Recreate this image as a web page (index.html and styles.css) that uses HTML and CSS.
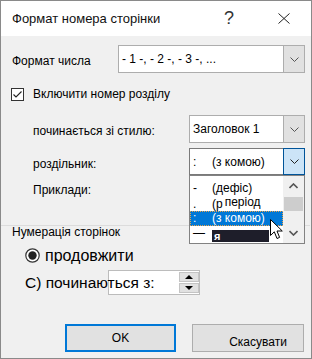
FILE: index.html
```html
<!DOCTYPE html>
<html lang="uk">
<head>
    <meta charset="UTF-8">
    <title>Формат номера сторінки</title>
    <link rel="stylesheet" href="styles.css">
</head>
<body>
    <div class="dialog">
        <!-- Title bar -->
        <div class="titlebar">
            <span class="title">Формат номера сторінки</span>
            <span class="help">?</span>
            <svg class="close" width="12" height="11" viewBox="0 0 12 11">
                <path d="M0.5 0.5 L11.5 10.5 M11.5 0.5 L0.5 10.5" stroke="#222" stroke-width="1" fill="none"/>
            </svg>
        </div>

        <div class="body">
            <!-- Number format -->
            <div class="row row-format">
                <span class="label">Формат числа</span>
                <div class="select select-wide">
                    <span class="value">- 1 -, - 2 -, - 3 -, ...</span>
                    <span class="arrow">
                        <svg width="9" height="5" viewBox="0 0 9 5"><polyline points="0.5,0.5 4.5,4.5 8.5,0.5" fill="none" stroke="#555" stroke-width="1"/></svg>
                    </span>
                </div>
            </div>

            <!-- Include chapter number -->
            <div class="row row-check">
                <svg class="checkbox" width="13" height="13" viewBox="0 0 13 13">
                    <rect x="0.5" y="0.5" width="12" height="12" fill="#fff" stroke="#333"/>
                    <polyline points="2.5,6.5 5,9 10.5,3.5" fill="none" stroke="#222" stroke-width="1.1"/>
                </svg>
                <span class="check-text">Включити номер розділу</span>
            </div>

            <div class="row row-sub row-style">
                <span class="label">починається зі стилю:</span>
                <div class="select">
                    <span class="value">Заголовок 1</span>
                    <span class="arrow">
                        <svg width="9" height="5" viewBox="0 0 9 5"><polyline points="0.5,0.5 4.5,4.5 8.5,0.5" fill="none" stroke="#555" stroke-width="1"/></svg>
                    </span>
                </div>
            </div>

            <div class="row row-sub row-sep">
                <span class="label">роздільник:</span>
                <div class="select-wrap">
                    <div class="select select-active">
                        <span class="value"><span class="sym">:</span>(з комою)</span>
                        <span class="arrow">
                            <svg width="9" height="5" viewBox="0 0 9 5"><polyline points="0.5,0.5 4.5,4.5 8.5,0.5" fill="none" stroke="#222" stroke-width="1"/></svg>
                        </span>
                    </div>

                    <!-- Open dropdown list -->
                    <div class="droplist">
                        <div class="options">
                            <div class="option"><span class="sym">-</span>(дефіс)</div>
                            <div class="option"><span class="sym">.</span>(р<span class="glitch">період</span></div>
                            <div class="option selected"><span class="sym">:</span>(з комою)</div>
                            <div class="option"><span class="sym">—</span><span class="dark">я</span></div>
                        </div>
                        <div class="scrollbar">
                            <span class="scroll-btn">
                                <svg width="9" height="6" viewBox="0 0 9 6"><polyline points="0.5,5 4.5,1 8.5,5" fill="none" stroke="#555" stroke-width="1.6"/></svg>
                            </span>
                            <span class="thumb"></span>
                            <span class="scroll-space"></span>
                            <span class="scroll-btn">
                                <svg width="9" height="6" viewBox="0 0 9 6"><polyline points="0.5,1 4.5,5 8.5,1" fill="none" stroke="#555" stroke-width="1.6"/></svg>
                            </span>
                        </div>
                    </div>

                    <svg class="cursor" width="14" height="21" viewBox="0 0 14 21">
                        <path d="M0.5 0.5 L0.5 16.5 L4.3 12.8 L7 19.5 L9.6 18.4 L7 12 L12.3 12 Z" fill="#fff" stroke="#000" stroke-width="1"/>
                    </svg>
                </div>
            </div>

            <div class="row row-sub row-examples">Приклади:</div>

            <!-- Page numbering -->
            <div class="group">
                <div class="group-title">Нумерація сторінок</div>
                <div class="radio-row">
                    <svg class="radio" width="15" height="15" viewBox="0 0 15 15">
                        <circle cx="7.5" cy="7.5" r="6.7" fill="#fff" stroke="#333" stroke-width="1.2"/>
                        <circle cx="7.5" cy="7.5" r="4.2" fill="#222"/>
                    </svg>
                    <span class="big-text">продовжити</span>
                </div>
                <div class="spin-row">
                    <span class="spin-label">С) починаються з:</span>
                    <div class="spin">
                        <div class="spin-btns">
                            <span class="spin-btn">
                                <svg width="8" height="4" viewBox="0 0 8 4"><polygon points="0,4 4,0 8,4" fill="#000"/></svg>
                            </span>
                            <span class="spin-btn">
                                <svg width="8" height="4" viewBox="0 0 8 4"><polygon points="0,0 8,0 4,4" fill="#000"/></svg>
                            </span>
                        </div>
                    </div>
                </div>
            </div>

            <div class="buttons">
                <button class="btn btn-ok">OK</button>
                <button class="btn btn-cancel">Скасувати</button>
            </div>
        </div>
    </div>
</body>
</html>
```

FILE: styles.css
```css
* {
    box-sizing: border-box;
}

body {
    margin: 0;
    font-family: "Liberation Sans", Arial, sans-serif;
    font-size: 12px;
    color: #000;
    background: #fff;
}

.dialog {
    width: 312px;
    height: 359px;
    border: 1px solid #8a8a8a;
    background: #f0f0f0;
    display: flex;
    flex-direction: column;
}

/* Title bar */
.titlebar {
    height: 35px;
    flex-shrink: 0;
    background: #fff;
    display: flex;
    align-items: center;
    padding: 0 21px 0 11px;
}

.title {
    flex: 1;
    font-size: 13px;
    color: #111;
}

.help {
    width: 10px;
    margin-right: 44px;
    font-size: 18px;
    color: #333;
    margin-top: -1px;
}

.close {
    display: block;
}

/* Dialog body */
.body {
    flex: 1;
    padding: 9px 6px 0 11px;
    display: flex;
    flex-direction: column;
}

.row {
    display: flex;
    align-items: center;
    justify-content: space-between;
    flex-shrink: 0;
}

.row-format {
    height: 28px;
}

.row-check {
    height: 16px;
    margin-top: 13px;
    justify-content: flex-start;
}

.checkbox {
    margin-left: -1px;
    display: block;
}

.check-text {
    margin-left: 9px;
}

.row-sub {
    padding-left: 21px;
}

.row-style {
    height: 28px;
    margin-top: 13px;
}

.row-sep {
    height: 27px;
    margin-top: 5px;
}

.row-examples {
    height: 16px;
    margin-top: 7px;
    justify-content: flex-start;
}

.label {
    padding-top: 4px;
}

/* Combo boxes */
.select {
    width: 116px;
    height: 28px;
    display: flex;
    background: #fff;
    border: 1px solid #adadad;
}

.select-wide {
    width: 187px;
}

.value {
    flex: 1;
    display: flex;
    align-items: center;
    padding-left: 3px;
    white-space: nowrap;
}

.arrow {
    width: 21px;
    background: #e1e1e1;
    border-left: 1px solid #adadad;
    display: flex;
    align-items: center;
    justify-content: center;
}

.select-wrap {
    position: relative;
}

.select-active {
    height: 27px;
    border-color: #7a7a7a;
}

.select-active .arrow {
    background: #cce4f7;
    border: 1px solid #005499;
    margin: -1px -1px -1px 0;
    width: 22px;
}

.sym {
    display: inline-block;
    width: 19px;
}

/* Dropdown list, open over the form */
.droplist {
    position: absolute;
    top: 100%;
    left: 0;
    width: 116px;
    height: 69px;
    z-index: 2;
    display: flex;
    background: #fff;
    border: 1px solid #828282;
    overflow: hidden;
}

.options {
    width: 93px;
    padding-top: 5px;
}

.option {
    height: 15px;
    line-height: 15px;
    padding-left: 3px;
    white-space: nowrap;
}

.glitch {
    display: inline-block;
    margin-left: 2px;
    background: #fff;
    line-height: 12px;
    vertical-align: 2px;
}

.option.selected {
    background: #0078d7;
    color: #fff;
    outline: 1px dotted #e9a34a;
    outline-offset: -1px;
}

.dark {
    display: inline-block;
    width: 57px;
    height: 12px;
    margin-top: 4px;
    padding-left: 2px;
    font-size: 11px;
    line-height: 12px;
    vertical-align: top;
    background: #1e1e2a;
    color: #fff;
    font-weight: bold;
}

.scrollbar {
    width: 21px;
    background: #f0f0f0;
    display: flex;
    flex-direction: column;
}

.scroll-btn {
    height: 20px;
    display: flex;
    align-items: center;
    justify-content: center;
}

.thumb {
    height: 14px;
    margin: 1px 1px 0 1px;
    background: #cdcdcd;
}

.scroll-space {
    flex: 1;
}

.cursor {
    position: absolute;
    left: 81px;
    top: 71px;
    z-index: 3;
}

/* Page numbering group */
.group {
    margin: 27px -5px 0 -11px;
    padding: 0 5px 0 11px;
    border-top: 1px solid #dcdcdc;
    flex-shrink: 0;
}

.group-title {
    height: 13px;
    line-height: 13px;
}

.radio-row {
    height: 17px;
    margin-top: 8px;
    padding-left: 13px;
    display: flex;
    align-items: center;
}

.radio {
    display: block;
}

.big-text {
    margin-left: 5px;
    font-size: 16px;
}

.spin-row {
    height: 25px;
    margin-top: 6px;
    padding-left: 13px;
    display: flex;
    align-items: center;
}

.spin-label {
    width: 83px;
    font-size: 15.5px;
    white-space: nowrap;
    position: relative;
    z-index: 1;
}

.spin {
    width: 92px;
    height: 25px;
    background: #fff;
    border: 1px solid #bcbcbc;
    padding: 1px 0 1px 0;
    display: flex;
    justify-content: flex-end;
}

.spin-btns {
    width: 20px;
    display: flex;
    flex-direction: column;
    gap: 1px;
}

.spin-btn {
    flex: 1;
    background: #e1e1e1;
    border: 1px solid #c4c4c4;
    display: flex;
    align-items: center;
    justify-content: center;
}

/* OK / Cancel */
.buttons {
    margin-top: 29px;
    margin-right: 1px;
    display: flex;
    justify-content: flex-end;
    gap: 16px;
}

.btn {
    height: 28px;
    font-family: "Liberation Sans", Arial, sans-serif;
    font-size: 12px;
    color: #000;
    background: #e1e1e1;
    border: 1px solid #adadad;
    padding: 0;
}

.btn-ok {
    width: 111px;
    border: 2px solid #0078d7;
}

.btn-cancel {
    width: 112px;
    padding: 8px 0 0 20px;
}
```
